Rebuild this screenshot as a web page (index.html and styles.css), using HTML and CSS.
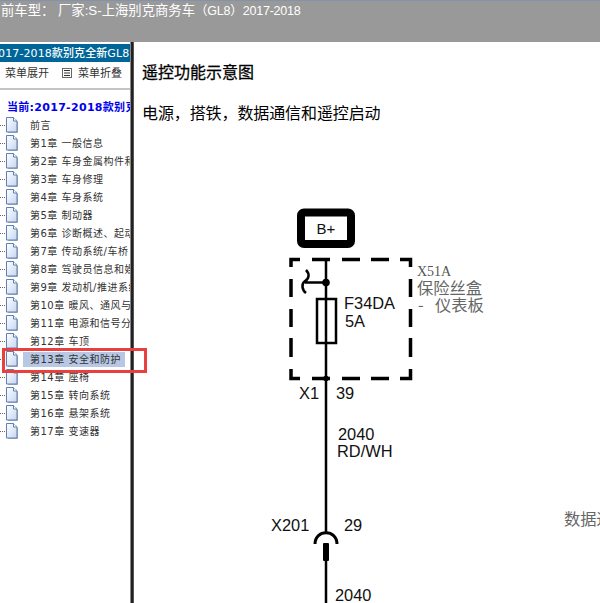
FILE: index.html
```html
<!DOCTYPE html>
<html lang="zh">
<head>
<meta charset="utf-8">
<title>遥控功能示意图</title>
<link rel="stylesheet" href="styles.css">
</head>
<body>
<svg class="defs" width="0" height="0" aria-hidden="true">
  <defs>
    <linearGradient id="docfill" x1="0" y1="0" x2="1" y2="1"><stop offset="0" stop-color="#ffffff"/><stop offset="1" stop-color="#c4d6f2"/></linearGradient>
    <symbol id="doc" viewBox="0 0 14 17">
      <path d="M3 2h8l2 3v11H3z" fill="#b5b5b5"/>
      <path d="M1.500 .5h7l3.500 3.500v11h-10.500z" fill="url(#docfill)" stroke="#5f7fb5"/>
      <path d="M8.500 .5v3.500h3.500" fill="#fff" stroke="#5f7fb5"/>
    </symbol>
  </defs>
</svg>
<header class="topbar">前车型： 厂家:S-上海别克商务车<span class="top-tail">（GL8）2017-2018</span></header>
<div class="main">
  <aside class="side">
    <div class="side-title">2017-2018款别克全新GL8</div>
    <div class="side-tools">
      <span class="tool-a">菜单展开</span>
      <svg class="tool-icon" width="10" height="10" viewBox="0 0 10 10"><rect x=".5" y=".5" width="9" height="9" fill="#fff" stroke="#666"/><path d="M2 2.500h6M2 5h6M2 7.500h6" stroke="#333"/></svg>
      <span>菜单折叠</span>
    </div>
    <div class="current">当前:2017-2018款别克全新GL8</div>
    <ul class="tree">
      <li class="row"><svg class="doc"><use href="#doc"/></svg><span class="lbl">前言</span></li>
      <li class="row"><svg class="doc"><use href="#doc"/></svg><span class="lbl">第1章 一般信息</span></li>
      <li class="row"><svg class="doc"><use href="#doc"/></svg><span class="lbl">第2章 车身金属构件和</span></li>
      <li class="row"><svg class="doc"><use href="#doc"/></svg><span class="lbl">第3章 车身修理</span></li>
      <li class="row"><svg class="doc"><use href="#doc"/></svg><span class="lbl">第4章 车身系统</span></li>
      <li class="row"><svg class="doc"><use href="#doc"/></svg><span class="lbl">第5章 制动器</span></li>
      <li class="row"><svg class="doc"><use href="#doc"/></svg><span class="lbl">第6章 诊断概述、起动</span></li>
      <li class="row"><svg class="doc"><use href="#doc"/></svg><span class="lbl">第7章 传动系统/车桥</span></li>
      <li class="row"><svg class="doc"><use href="#doc"/></svg><span class="lbl">第8章 驾驶员信息和娱乐</span></li>
      <li class="row"><svg class="doc"><use href="#doc"/></svg><span class="lbl">第9章 发动机/推进系统</span></li>
      <li class="row"><svg class="doc"><use href="#doc"/></svg><span class="lbl">第10章 暖风、通风与空调</span></li>
      <li class="row"><svg class="doc"><use href="#doc"/></svg><span class="lbl">第11章 电源和信号分布</span></li>
      <li class="row"><svg class="doc"><use href="#doc"/></svg><span class="lbl">第12章 车顶</span></li>
      <li class="row"><svg class="doc"><use href="#doc"/></svg><span class="lbl sel">第13章 安全和防护</span></li>
      <li class="row"><svg class="doc"><use href="#doc"/></svg><span class="lbl">第14章 座椅</span></li>
      <li class="row"><svg class="doc"><use href="#doc"/></svg><span class="lbl">第15章 转向系统</span></li>
      <li class="row"><svg class="doc"><use href="#doc"/></svg><span class="lbl">第16章 悬架系统</span></li>
      <li class="row"><svg class="doc"><use href="#doc"/></svg><span class="lbl">第17章 变速器</span></li>
    </ul>
  </aside>
  <div class="splitter"></div>
  <main class="content">
    <h1 class="doc-title">遥控功能示意图</h1>
    <p class="doc-sub">电源，搭铁，数据通信和遥控启动</p>
    <svg class="diagram" width="466" height="400" viewBox="134 203 466 400">
      <rect x="301" y="212.500" width="50" height="31.500" rx="3" fill="none" stroke="#000" stroke-width="8"/>
      <text x="326" y="234" class="d-t d-bplus" text-anchor="middle">B+</text>
      <path class="dash" d="M291 267V259.500H300M312 259.500H330M342 259.500H360M371 259.500H389M400 259.500H410.500V267M291 279V297M291 309V327M291 338V357M291 369V378.500H300M312 378.500H330M342 378.500H360M371 378.500H389M400 378.500H410.500V369M410.500 279V297M410.500 309V327M410.500 338V357"/>
      <path class="wire" d="M326 258V532M326 543V603"/>
      <rect class="fuse" x="317" y="299" width="19" height="44"/>
      <path class="wire" d="M326 299V343"/>
      <path class="wire" d="M305 282.500H326M306 270C310 274 309 279 305 281C301 284 302 290 306 293"/>
      <circle cx="326" cy="282.500" r="3.800"/>
      <circle cx="326" cy="378.500" r="2.800"/>
      <text x="344" y="309" class="d-t">F34DA</text>
      <text x="345" y="327" class="d-t">5A</text>
      <text x="417" y="276" class="d-serif">X51A</text>
      <text x="417" y="294" class="d-cn">保险丝盒</text>
      <text x="418" y="311" class="d-cn">-</text>
      <text x="435" y="311" class="d-cn">仪表板</text>
      <text x="299" y="399" class="d-t">X1</text>
      <text x="336" y="399" class="d-t">39</text>
      <text x="338" y="440" class="d-t">2040</text>
      <text x="337" y="457" class="d-t">RD/WH</text>
      <text x="271" y="531" class="d-t">X201</text>
      <text x="344" y="531" class="d-t">29</text>
      <path d="M315 544C315 529 337 529 337 544" fill="none" stroke="#000" stroke-width="3"/>
      <rect x="323" y="543" width="6" height="18" rx="1"/>
      <text x="335" y="601" class="d-t">2040</text>
      <text x="564" y="525" class="d-cn">数据通信</text>
    </svg>
  </main>
  <div class="redbox"></div>
</div>
</body>
</html>
```
FILE: styles.css
```css
* { box-sizing: border-box; }
html, body { margin: 0; padding: 0; height: 100%; overflow: hidden; background: #fff; }
body { font-family: "Liberation Sans", "Noto Sans CJK SC", sans-serif; width: 600px; height: 603px; display: flex; flex-direction: column; }
.defs { position: absolute; }
.topbar { height: 42px; flex: none; background: #999; border-top: 1px solid #8593aa; color: #fff; font-size: 13.330px; line-height: 20px; white-space: nowrap; overflow: hidden; padding-left: 1px; }
.top-tail { font-size: 12.500px; letter-spacing: -0.200px; }
.main { flex: 1; display: flex; min-height: 0; position: relative; }
.side { width: 130px; flex: none; overflow: hidden; background: #fff; font-family: "DejaVu Sans", "Noto Sans CJK SC", sans-serif; }
.side-title { height: 18px; margin-top: 2px; background: #006699; color: #fff; font-size: 11px; letter-spacing: 0.100px; line-height: 19px; white-space: nowrap; text-indent: -9px; font-weight: 500; }
.side-tools { height: 28px; border-bottom: 2px solid #c4c4c4; display: flex; align-items: flex-start; padding-top: 5px; color: #333; padding-left: 5px; white-space: nowrap; font-size: 11px; line-height: 14px; }
.tool-a { margin-right: 13px; }
.tool-icon { margin: 1px 6px 0 0; flex: none; }
.current { color: #0000ee; font-weight: bold; font-size: 11px; letter-spacing: 0.300px; line-height: 14px; margin-top: 11px; padding-left: 7px; white-space: nowrap; }
.tree { list-style: none; margin: 1px 0 0; padding: 0; }
.row { height: 18px; display: flex; align-items: center; white-space: nowrap; padding-left: 5px; position: relative; color: #333; }
.row::before { content: ""; position: absolute; left: 0; top: 9px; width: 5px; border-top: 1px dotted #666; }
.doc { width: 14px; height: 17px; flex: none; margin-right: 11px; }
.lbl { font-size: 10px; letter-spacing: 0.500px; line-height: 15px; }
.sel { background: #b8c8e4; margin-left: -7px; padding: 0 4px 0 7px; }
.redbox { position: absolute; left: 2px; top: 306px; width: 145px; height: 25px; border: 3px solid #e8403f; z-index: 3; }
.splitter { width: 4px; flex: none; background: linear-gradient(to right, #888 25%, #222 25%, #222 75%, #555 75%); }
.content { flex: 1; overflow: hidden; padding-left: 8px; min-width: 0; }
.doc-title { font-size: 16px; font-weight: normal; -webkit-text-stroke: 0.300px #000; color: #000; margin: 0; line-height: 22px; padding-top: 20px; }
.doc-sub { font-size: 16px; letter-spacing: -0.100px; margin: 19px 0 0; line-height: 22px; color: #000; }
.diagram { display: block; margin: 78px 0 0 -8px; }
.d-t { font-family: "Liberation Sans", sans-serif; font-size: 16.400px; fill: #111; }
.d-bplus { font-size: 15px; }
.d-serif { font-family: "Liberation Serif", serif; font-size: 14px; fill: #555; }
.d-cn { font-family: "Noto Sans CJK SC", sans-serif; font-size: 16.300px; fill: #666; }
.dash { fill: none; stroke: #000; stroke-width: 3.500px; }
.wire { fill: none; stroke: #000; stroke-width: 2.500px; }
.fuse { fill: #fff; stroke: #000; stroke-width: 2.500px; }
```
